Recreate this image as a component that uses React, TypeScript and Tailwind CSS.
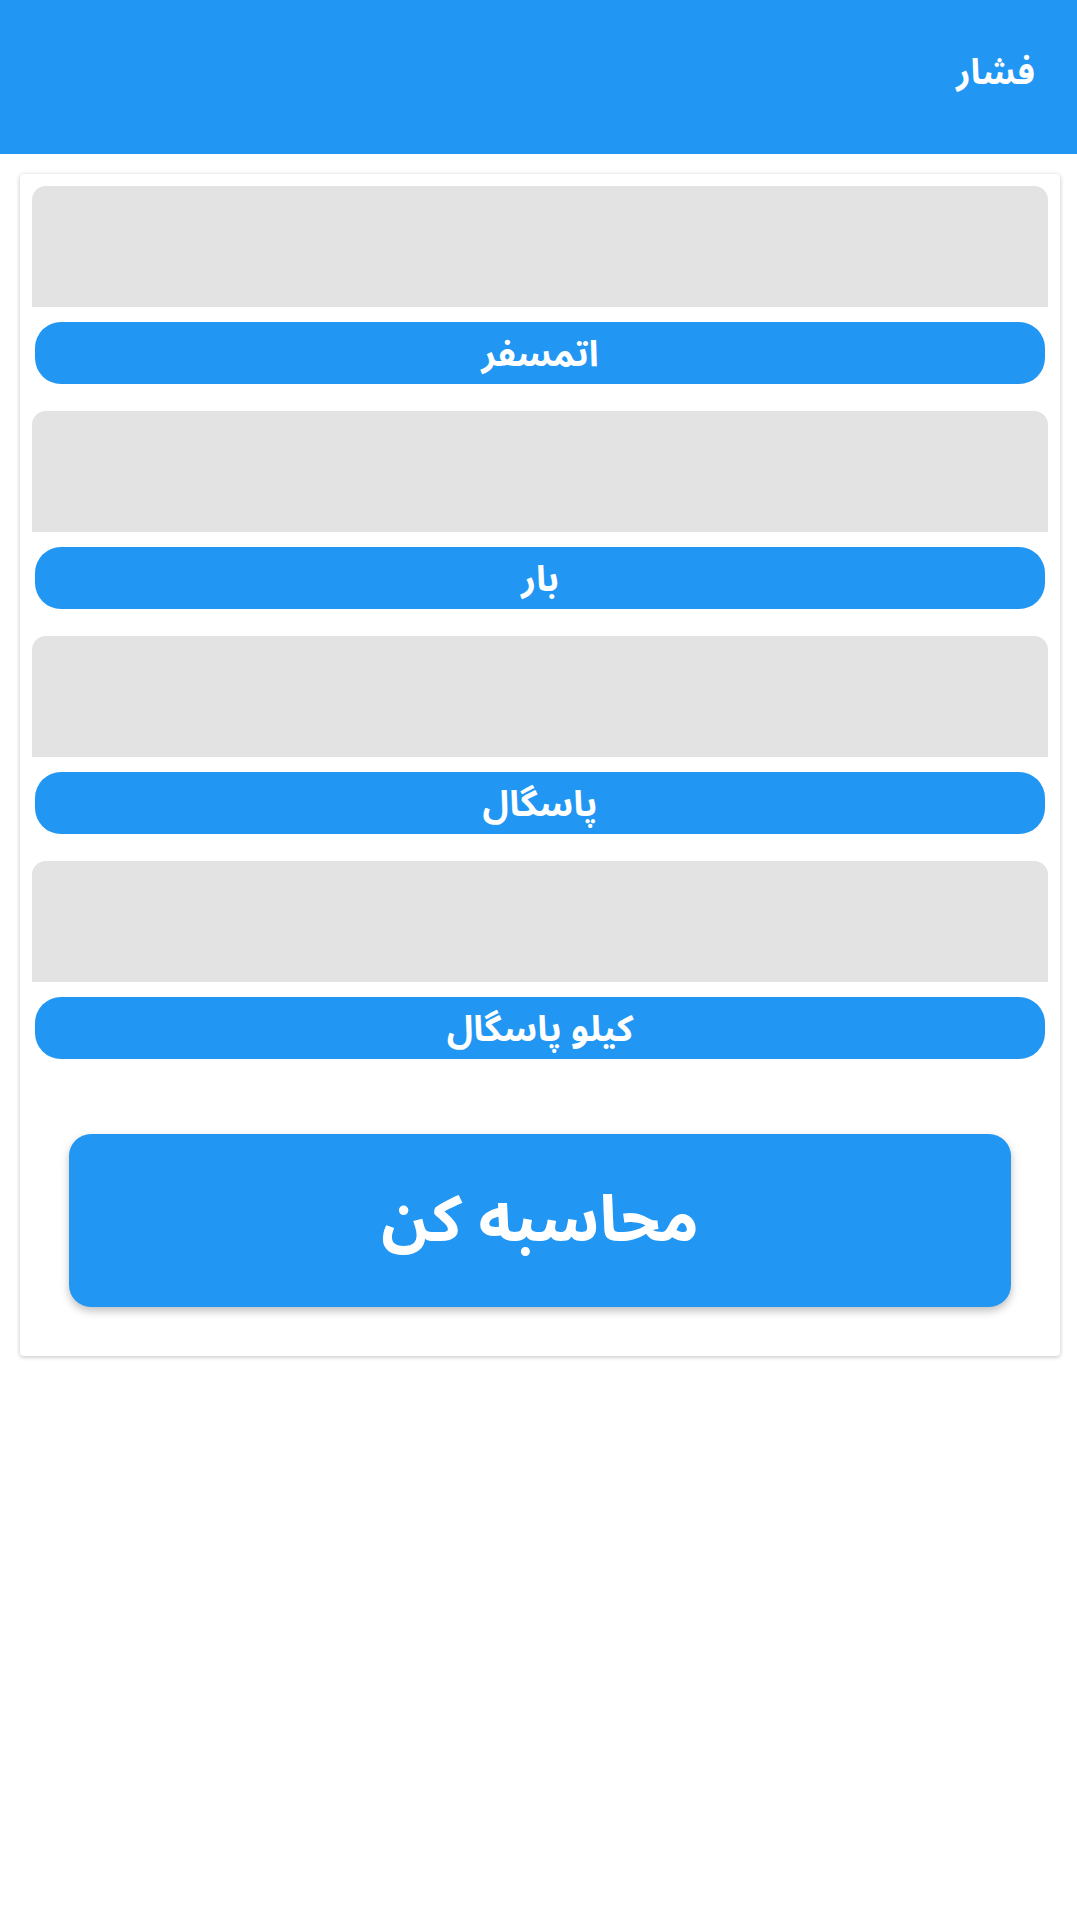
import React from "react";

const units = ["اتمسفر", "بار", "پاسگال", "کیلو پاسگال"];

export default function App() {
  return (
    <div
      dir="rtl"
      className="w-[1077px] min-h-[1915px] bg-white"
      style={{ fontFamily: '"Noto Sans Arabic", Vazirmatn, "DejaVu Sans", "Noto Sans", sans-serif' }}
    >
      <header className="h-[154px] bg-[#2196f3] flex items-center px-[42px] pb-[8px]">
        <h1 className="text-white text-[35px] font-bold">فشار</h1>
      </header>
      <div className="mt-[20px] mr-[17px] w-[1040px] bg-white rounded-[4px] shadow-[0_1px_4px_rgba(0,0,0,0.25)] pt-[12px] px-[12px] pb-[49px]">
        {units.map((u) => (
          <div key={u} className="mb-[27px]">
            <div className="h-[121px] bg-[#e4e3e4] rounded-t-[14px]" />
            <div className="mt-[15px] mx-[3px] h-[62px] rounded-[26px] bg-[#2196f3] flex items-center justify-center pt-[4px]">
              <span className="text-white text-[36px] font-bold leading-none">{u}</span>
            </div>
          </div>
        ))}
        <div className="pt-[48px] px-[37px]">
          <button className="w-full h-[173px] rounded-[22px] bg-[#2196f3] shadow-[0_4px_8px_rgba(0,0,0,0.25)] flex items-center justify-center">
            <span className="text-white text-[64px] font-bold leading-none">محاسبه کن</span>
          </button>
        </div>
      </div>
    </div>
  );
}
